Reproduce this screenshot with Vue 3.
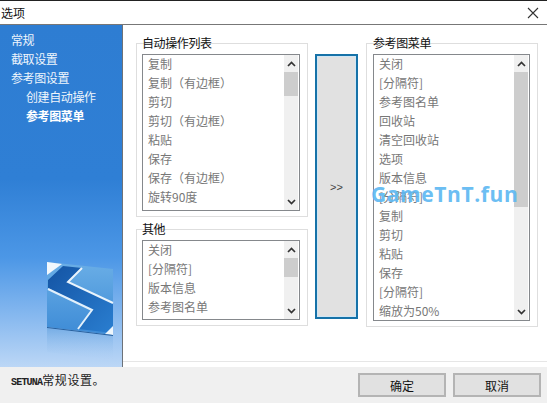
<template>
  <div class="dialog">
    <div class="titlebar">
      <span class="title">选项</span>
      <svg class="close" width="12" height="12" viewBox="0 0 12 12"><path d="M1 1 L11 11 M11 1 L1 11" stroke="#333" stroke-width="1.1" fill="none" /></svg>
    </div>

    <div class="body">
      <aside class="side">
        <div v-for="n in nav" :key="n.label" class="nav" :class="{ sub: n.sub, active: n.active }">{{ n.label }}</div>
        <svg class="logo" width="68" height="100" viewBox="46 261 68 100">
          <defs>
            <linearGradient id="panel" x1="0" y1="0" x2="0" y2="1">
              <stop offset="0" stop-color="#6aaee6" />
              <stop offset="1" stop-color="#3d8bd6" />
            </linearGradient>
            <linearGradient id="band" x1="0" y1="0" x2="1" y2="1">
              <stop offset="0" stop-color="#1454a4" />
              <stop offset="1" stop-color="#2a7ed0" />
            </linearGradient>
            <linearGradient id="fade" x1="0" y1="0" x2="0" y2="1">
              <stop offset="0" stop-color="#5f9fdc" stop-opacity="0.55" />
              <stop offset="1" stop-color="#a9ccf2" stop-opacity="0" />
            </linearGradient>
          </defs>
          <polygon points="47,328 113,336 113,360 47,352" fill="url(#fade)" />
          <polygon points="47,262 113,269 113,335 47,327" fill="url(#panel)" />
          <polygon points="47,262 62,264 47,275" fill="#f2f8fd" />
          <polygon points="63,266 82,268 68,282 113,303 113,333 78,329 92,310 48,288 48,280" fill="url(#band)" />
          <polyline points="82,268 68,282 113,303" fill="none" stroke="#eaf4fc" stroke-width="2" />
          <polyline points="48,289 92,310 78,329" fill="none" stroke="#e2f0fb" stroke-width="2" />
          <polygon points="113,326 113,335 105,334" fill="#eef6fc" />
          <polygon points="47,327 113,335 113,336 47,328" fill="#245f9e" />
        </svg>
      </aside>
      <div class="rule"></div>

      <main class="content">
        <div class="col">
          <section v-for="g in leftGroups" :key="g.title" class="group">
            <div class="legend">{{ g.title }}</div>
            <div class="list" :style="{ height: g.height + 'px' }">
              <div class="items">
                <div v-for="it in g.items" :key="it" class="item">{{ it }}</div>
              </div>
              <div class="bar">
                <span class="arrow">
                  <svg width="9" height="6" viewBox="0 0 9 6"><path d="M1 5 L4.5 1.5 L8 5" fill="none" stroke="#333" stroke-width="1.7" /></svg>
                </span>
                <div class="thumb" :style="{ height: g.thumb + 'px' }"></div>
                <span class="arrow down">
                  <svg width="9" height="6" viewBox="0 0 9 6"><path d="M1 1 L4.5 4.5 L8 1" fill="none" stroke="#333" stroke-width="1.7" /></svg>
                </span>
              </div>
            </div>
          </section>
        </div>

        <button class="move">&gt;&gt;</button>

        <section class="group right">
          <div class="legend">{{ rightGroup.title }}</div>
          <div class="list" :style="{ height: rightGroup.height + 'px' }">
            <div class="items">
              <div v-for="(it, i) in rightGroup.items" :key="i" class="item">{{ it }}</div>
            </div>
            <div class="bar">
              <span class="arrow">
                <svg width="9" height="6" viewBox="0 0 9 6"><path d="M1 5 L4.5 1.5 L8 5" fill="none" stroke="#333" stroke-width="1.7" /></svg>
              </span>
              <div class="thumb" :style="{ height: rightGroup.thumb + 'px' }"></div>
              <span class="arrow down">
                <svg width="9" height="6" viewBox="0 0 9 6"><path d="M1 1 L4.5 4.5 L8 1" fill="none" stroke="#333" stroke-width="1.7" /></svg>
              </span>
            </div>
          </div>
        </section>
      </main>
    </div>

    <footer class="foot">
      <span class="hint"><span class="latin">SETUNA</span>常规设置。</span>
      <div class="btns">
        <button class="btn">确定</button>
        <button class="btn">取消</button>
      </div>
    </footer>

    <div class="watermark">GameTnT.fun</div>
  </div>
</template>

<script setup>
const nav = [
  { label: '常规' },
  { label: '截取设置' },
  { label: '参考图设置' },
  { label: '创建自动操作', sub: true },
  { label: '参考图菜单', sub: true, active: true }
]

const leftGroups = [
  {
    title: '自动操作列表',
    height: 157,
    thumb: 24,
    items: ['复制', '复制（有边框）', '剪切', '剪切（有边框）', '粘贴', '保存', '保存（有边框）', '旋转90度']
  },
  {
    title: '其他',
    height: 80,
    thumb: 19,
    items: ['关闭', '[分隔符]', '版本信息', '参考图名单']
  }
]

const rightGroup = {
  title: '参考图菜单',
  height: 267,
  thumb: 135,
  items: ['关闭', '[分隔符]', '参考图名单', '回收站', '清空回收站', '选项', '版本信息', '[分隔符]', '复制', '剪切', '粘贴', '保存', '[分隔符]', '缩放为50%']
}
</script>

<style>
html, body { margin: 0; background: #fff; }
</style>

<style scoped>
.dialog {
  position: relative;
  width: 547px;
  height: 403px;
  overflow: hidden;
  display: flex;
  flex-direction: column;
  background: #fff;
  font-family: "Noto Sans CJK SC", sans-serif;
  font-size: 12px;
}

.titlebar {
  height: 23px;
  flex: none;
  display: flex;
  align-items: center;
  justify-content: space-between;
  padding: 0 8px 0 1px;
  border-top: 1px solid #222;
  border-bottom: 1px solid #777;
}
.title { font-size: 12px; color: #111; }

.body { flex: 1; display: flex; min-height: 0; }

.side {
  width: 122px;
  flex: none;
  display: flex;
  flex-direction: column;
  padding-top: 5px;
  box-sizing: border-box;
  background: linear-gradient(to bottom, #2e7dd2 0, #2f7fd5 45%, #4c97e6 68%, #86b8ef 85%, #bcd7f6 100%);
}
.nav {
  height: 19px;
  line-height: 19px;
  padding-left: 11px;
  color: #eef5fc;
  font-size: 12px;
  letter-spacing: -0.4px;
}
.nav.sub { padding-left: 26px; }
.nav.active { font-weight: 700; color: #fff; }
.logo { margin: auto 0 6px 46px; display: block; }

.rule { width: 1px; flex: none; background: #6d7278; }

.content {
  flex: 1;
  display: flex;
  gap: 7px;
  padding: 18px 9px 0 13px;
  align-items: flex-start;
  margin-bottom: 5px;
  border-bottom: 1px solid #e6e6e6;
}

.col { display: flex; flex-direction: column; gap: 12px; }

.group {
  width: 172px;
  box-sizing: border-box;
  border: 1px solid #dedede;
  padding: 0 7px 5px 5px;
}
.right { margin-left: 1px; padding-left: 6px; }
.legend {
  height: 10px;
  line-height: 0;
  color: #111;
  font-size: 12px;
  letter-spacing: -0.4px;
  position: relative;
  top: -1px;
}

.list {
  display: flex;
  box-sizing: border-box;
  border: 1px solid #85888c;
  background: #fff;
  overflow: hidden;
}
.items { flex: 1; min-width: 0; padding: 0 0 0 5px; }
.item {
  height: 19px;
  line-height: 17px;
  color: #777;
  font-size: 12px;
  white-space: nowrap;
}

.bar {
  width: 14px;
  flex: none;
  margin-right: 1px;
  display: flex;
  flex-direction: column;
  background: #f0f0f0;
}
.arrow {
  height: 17px;
  flex: none;
  display: flex;
  align-items: center;
  justify-content: center;
}
.arrow.down { margin-top: auto; }
.thumb { background: #cdcdcd; flex: none; }

.move {
  width: 43px;
  height: 265px;
  margin-top: 11px;
  box-sizing: border-box;
  border: 2px solid #1672a8;
  background: #e1e1e1;
  box-shadow: inset 0 0 0 1px #cfe6f5;
  color: #444;
  font-family: "Liberation Sans", sans-serif;
  font-size: 11px;
  padding: 0;
}

.foot {
  height: 36px;
  flex: none;
  display: flex;
  align-items: center;
  justify-content: space-between;
  padding: 0 6px 0 11px;
  background: #f0f0f0;
}
.hint { font-size: 12px; color: #222; letter-spacing: 0.6px; position: relative; top: -6px; }
.latin {
  font-family: "Liberation Mono", monospace;
  font-weight: 700;
  font-size: 10px;
  letter-spacing: -0.8px;
}
.btns { display: flex; gap: 7px; }
.btn {
  width: 88px;
  height: 24px;
  box-sizing: border-box;
  border: 2px solid #b4b4b4;
  background: #e1e1e1;
  color: #111;
  font-family: "Noto Sans CJK SC", sans-serif;
  font-size: 12px;
  padding: 0;
}

.watermark {
  position: absolute;
  left: 371px;
  top: 181px;
  color: #5fb9f2;
  font-family: "Open Sans", sans-serif;
  font-weight: 700;
  font-size: 21px;
  line-height: 26px;
  letter-spacing: 0.6px;
  opacity: 0.92;
}
</style>
